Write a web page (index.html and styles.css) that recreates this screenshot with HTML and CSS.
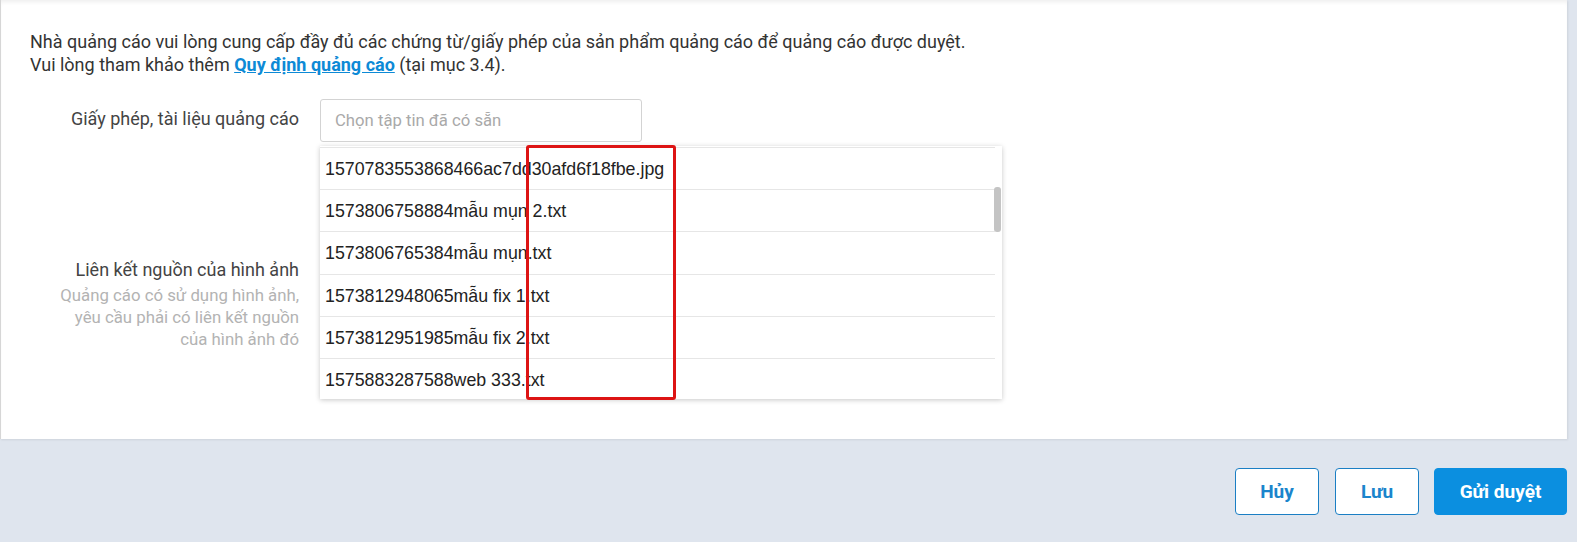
FILE: index.html
```html
<!DOCTYPE html>
<html lang="vi">
<head>
    <meta charset="UTF-8">
    <meta name="viewport" content="width=device-width, initial-scale=1.0">
    <title>Giấy phép quảng cáo</title>
    <link rel="stylesheet" href="styles.css">
</head>
<body>
    <div class="card">
        <p class="intro">
            Nhà quảng cáo vui lòng cung cấp đầy đủ các chứng từ/giấy phép của sản phẩm quảng cáo để quảng cáo được duyệt.<br>
            Vui lòng tham khảo thêm <a href="#" class="rule-link">Quy định quảng cáo</a> (tại mục 3.4).
        </p>

        <div class="form-row row-license">
            <div class="label-col">
                <label for="license">Giấy phép, tài liệu quảng cáo</label>
            </div>
            <div class="field-col">
                <input type="text" id="license" class="text-input" placeholder="Chọn tập tin đã có sẵn">
                <div class="dropdown">
                    <ul class="file-list">
                        <li>1570783553868466ac7dd30afd6f18fbe.jpg</li>
                        <li>1573806758884mẫu mụn 2.txt</li>
                        <li>1573806765384mẫu mụn.txt</li>
                        <li>1573812948065mẫu fix 1.txt</li>
                        <li>1573812951985mẫu fix 2.txt</li>
                        <li>1575883287588web 333.txt</li>
                    </ul>
                    <div class="scroll-thumb"></div>
                </div>
            </div>
        </div>

        <div class="form-row row-source">
            <div class="label-col">
                <label for="source">Liên kết nguồn của hình ảnh</label>
                <div class="hint">Quảng cáo có sử dụng hình ảnh,<br>yêu cầu phải có liên kết nguồn<br>của hình ảnh đó</div>
            </div>
            <div class="field-col">
                <input type="text" id="source" class="text-input">
            </div>
        </div>

        <div class="highlight"></div>
    </div>

    <div class="actions">
        <button class="btn btn-outline">Hủy</button>
        <button class="btn btn-outline">Lưu</button>
        <button class="btn btn-primary">Gửi duyệt</button>
    </div>
</body>
</html>
```

FILE: styles.css
```css
body {
    margin: 0;
    background-color: #dfe5ee;
    font-family: Roboto, "Noto Sans", sans-serif;
    color: #333;
}
.card {
    position: relative;
    width: 1567px;
    height: 439px;
    box-sizing: border-box;
    padding: 30px 0 0 29px;
    background-color: #fff;
    border-left: 1px solid #d6d6d6;
    box-shadow: inset 0 4px 4px -2px rgba(0, 0, 0, 0.07), 1px 1px 2px rgba(0, 0, 0, 0.08);
}
.intro {
    margin: 0;
    font-size: 18px;
    line-height: 23px;
}
.rule-link {
    color: #0d8ad6;
    font-weight: bold;
    text-decoration: underline;
}
.form-row {
    display: flex;
    gap: 21px;
}
.row-license {
    margin-top: 23px;
}
.row-source {
    margin-top: 116px;
}
.label-col {
    width: 269px;
    text-align: right;
}
.label-col label {
    display: block;
    font-size: 18px;
    line-height: 23px;
    color: #444;
    padding-top: 8px;
}
.row-source .label-col label {
    padding-top: 0;
}
.hint {
    margin-top: 3px;
    font-size: 16.8px;
    line-height: 22px;
    color: #b3b3b3;
}
.field-col {
    position: relative;
}
.text-input {
    display: block;
    width: 322px;
    height: 43px;
    box-sizing: border-box;
    padding: 0 14px;
    border: 1px solid #d3d3d3;
    border-radius: 3px;
    font-family: Roboto, sans-serif;
    font-size: 16.7px;
    color: #333;
}
.text-input::placeholder {
    color: #a9a9a9;
}
.dropdown {
    position: absolute;
    top: 47px;
    left: 0;
    width: 682px;
    height: 253px;
    overflow: hidden;
    background-color: #fff;
    box-shadow: 0 1px 5px rgba(0, 0, 0, 0.22);
    z-index: 2;
}
.file-list {
    list-style: none;
    margin: 0;
    padding: 0;
    width: 675px;
    border-top: 1px solid #e6e6e6;
    margin-top: 1px;
}
.file-list li {
    height: 41.2px;
    line-height: 43px;
    padding-left: 5px;
    border-bottom: 1px solid #e6e6e6;
    font-family: "Liberation Sans", Arial, sans-serif;
    font-size: 17.8px;
    color: #222;
    overflow: hidden;
}
.scroll-thumb {
    position: absolute;
    top: 41px;
    right: 1px;
    width: 7px;
    height: 45px;
    border-radius: 3px;
    background-color: #c4c4c4;
}
.highlight {
    position: absolute;
    left: 525px;
    top: 145px;
    width: 144px;
    height: 249px;
    border: 3px solid #dd1414;
    border-radius: 3px;
    z-index: 3;
}
.actions {
    display: flex;
    justify-content: flex-end;
    gap: 16px;
    padding: 29px 10px 0 0;
}
.btn {
    height: 47px;
    box-sizing: border-box;
    border-radius: 4px;
    font-family: Roboto, sans-serif;
    font-size: 19px;
    font-weight: bold;
    cursor: pointer;
}
.btn-outline {
    width: 84px;
    background-color: #fff;
    border: 1px solid #1b7fc4;
    color: #1b85cc;
}
.btn-primary {
    width: 133px;
    margin-left: -1px;
    background-color: #0b8fe0;
    border: 1px solid #0b8fe0;
    color: #fff;
}
```
